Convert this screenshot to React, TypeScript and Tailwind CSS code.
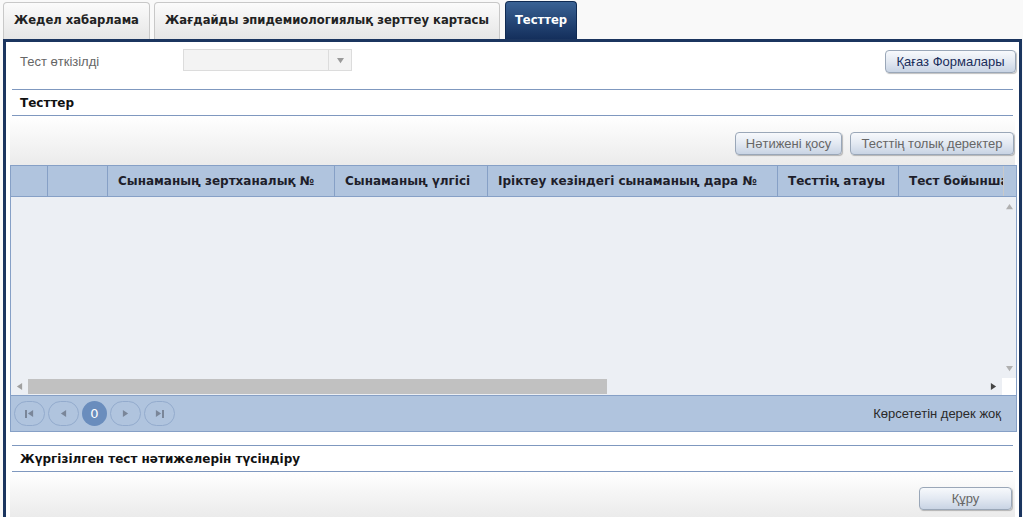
import React from 'react';

const sans = { fontFamily: '"DejaVu Sans", Verdana, sans-serif' };
const arial = { fontFamily: '"Liberation Sans", Arial, sans-serif' };

// small solid triangle, dir = which way it points
function Tri({ dir, color, size = 7 }: { dir: 'l' | 'r' | 'u' | 'd'; color: string; size?: number }) {
  const pts = {
    l: '7,0 7,8 1,4',
    r: '1,0 1,8 7,4',
    u: '0,7 8,7 4,1',
    d: '0,1 8,1 4,7',
  }[dir];
  return (
    <svg width={size} height={size} viewBox="0 0 8 8" aria-hidden>
      <polygon points={pts} fill={color} />
    </svg>
  );
}

function Tab({ label, active }: { label: string; active?: boolean }) {
  if (active) {
    return (
      <div
        style={sans}
        className="ml-px flex h-[38px] items-center rounded-t-[4px] border border-b-0 border-[#0f2a52] bg-gradient-to-b from-[#3a6294] to-[#142f5c] px-[9px] text-[11.6px] font-bold text-white"
      >
        {label}
      </div>
    );
  }
  return (
    <div
      style={sans}
      className="flex h-[37px] items-center rounded-t-[4px] border border-b-0 border-[#c8c8c8] bg-gradient-to-b from-[#fbfbfb] to-[#e6e6e6] px-[10px] text-[11.6px] font-bold text-[#222]"
    >
      {label}
    </div>
  );
}

function Btn({ label, w, disabled }: { label: string; w: string; disabled?: boolean }) {
  return (
    <div
      style={arial}
      className={`flex h-[23px] ${w} items-center justify-center rounded-[4px] border border-[#9aa7b8] bg-gradient-to-b from-[#f7f9fc] via-[#e3e9f2] to-[#c9d4e4] text-[13px] shadow-[1px_1px_1px_rgba(0,0,0,0.25)] ${
        disabled ? 'text-[#666]' : 'text-[#1a2d5a]'
      }`}
    >
      {label}
    </div>
  );
}

function SectionTitle({ label }: { label: string }) {
  return (
    <div className="mx-[6px] flex h-[27px] items-center border-y border-[#7f98bf] pl-[8px]">
      <span style={sans} className="text-[12px] font-bold text-[#111]">
        {label}
      </span>
    </div>
  );
}

function PagerBtn({ children }: { children: React.ReactNode }) {
  return (
    <div className="flex h-[25px] w-[31px] items-center justify-center rounded-full border border-[#93abcd]">
      {children}
    </div>
  );
}

const bar = <span className="inline-block h-[8px] w-[2px] bg-[#7a8699]" />;

const cols: [string, string][] = [
  ['', 'w-[37px]'],
  ['', 'w-[60px]'],
  ['Сынаманың зертханалық №', 'w-[227px]'],
  ['Сынаманың үлгісі', 'w-[153px]'],
  ['Іріктеу кезіндегі сынаманың дара №', 'w-[290px]'],
  ['Тесттің атауы', 'w-[121px]'],
  ['Тест бойынша', 'w-[105px]'],
];

export default function App() {
  return (
    <div className="h-[517px] w-[1023px] overflow-hidden bg-[#f9f9f9]">
      <div className="flex h-[39px] items-end gap-[4px] pl-[3px]">
        <Tab label="Жедел хабарлама" />
        <Tab label="Жағдайды эпидемиологиялық зерттеу картасы" />
        <Tab label="Тесттер" active />
      </div>

      <div className="ml-[3px] mr-[1px] flex h-[478px] flex-col border-x-[3px] border-t-[3px] border-[#1b355f] bg-white">
        <div className="flex h-[47px] items-start pr-[3px] pt-[7px]">
          <div style={arial} className="w-[177px] pl-[14px] pt-[3px] text-[13px] text-[#666]">
            Тест өткізілді
          </div>
          <div className="flex h-[22px] w-[169px] border border-[#dcdcdc] bg-[#f3f3f3]">
            <div className="flex-1" />
            <div className="flex w-[23px] items-center justify-center border-l border-[#dcdcdc]">
              <Tri dir="d" color="#9a9a9a" />
            </div>
          </div>
          <div className="ml-auto mt-px">
            <Btn label="Қағаз Формалары" w="w-[131px]" />
          </div>
        </div>

        <SectionTitle label="Тесттер" />

        <div className="mx-[4px] flex h-[49px] items-end justify-end gap-[8px] bg-gradient-to-b from-white to-[#ebebeb] pb-[10px] pr-[1px]">
          <Btn label="Нәтижені қосу" w="w-[107px]" disabled />
          <Btn label="Тесттің толық деректер" w="w-[164px]" disabled />
        </div>

        <div className="ml-[4px] mr-[2px] border border-[#86a0c6]">
          <div className="flex h-[30px] bg-[#b0c4de]">
            {cols.map(([t, w], i) => (
              <div
                key={i}
                style={sans}
                className={`${w} flex shrink-0 items-center overflow-hidden whitespace-nowrap border-r ${
                  i === cols.length - 1 ? 'border-[#c9c9c9]' : 'border-[#86a0c6]'
                } px-[10px] text-[12px] font-bold text-[#1e1e2a]`}
              >
                {t}
              </div>
            ))}
            <div className="flex-1" />
          </div>
          <div className="flex h-[182px] border-t border-[#86a0c6] bg-[#eceff4]">
            <div className="flex-1" />
            <div className="flex w-[14px] flex-col items-center justify-between py-[6px]">
              <Tri dir="u" color="#b0b0b0" />
              <Tri dir="d" color="#b0b0b0" />
            </div>
          </div>
          <div className="flex h-[17px] bg-[#eceff4]">
            <div className="flex w-[17px] items-center justify-center">
              <Tri dir="l" color="#a0a0a0" />
            </div>
            <div className="flex flex-1 items-center">
              <div className="h-[15px] w-[579px] bg-[#c1c1c1]" />
            </div>
            <div className="flex w-[17px] items-center justify-center">
              <Tri dir="r" color="#444" />
            </div>
            <div className="w-[14px] bg-white" />
          </div>
          <div className="flex h-[36px] items-center border-t border-[#86a0c6] bg-[#b0c4de] pl-[3px] pr-[15px]">
            <div className="flex items-center gap-[3px]">
              <PagerBtn>
                <span className="flex items-center">
                  {bar}
                  <Tri dir="l" color="#7a8699" />
                </span>
              </PagerBtn>
              <PagerBtn>
                <Tri dir="l" color="#7a8699" />
              </PagerBtn>
              <div
                style={sans}
                className="flex h-[25px] w-[25px] items-center justify-center rounded-full bg-[#6a8dbd] text-[13px] text-white"
              >
                0
              </div>
              <PagerBtn>
                <Tri dir="r" color="#7a8699" />
              </PagerBtn>
              <PagerBtn>
                <span className="flex items-center">
                  <Tri dir="r" color="#7a8699" />
                  {bar}
                </span>
              </PagerBtn>
            </div>
            <div style={arial} className="ml-auto text-[13px] text-[#2a2a2a]">
              Көрсететін дерек жоқ
            </div>
          </div>
        </div>

        <div className="h-[13px]" />
        <SectionTitle label="Жүргізілген тест нәтижелерін түсіндіру" />

        <div className="mx-[4px] flex flex-1 items-start justify-end bg-gradient-to-b from-white to-[#ebebeb] pr-[3px] pt-[15px]">
          <Btn label="Құру" w="w-[93px]" disabled />
        </div>
      </div>
    </div>
  );
}
